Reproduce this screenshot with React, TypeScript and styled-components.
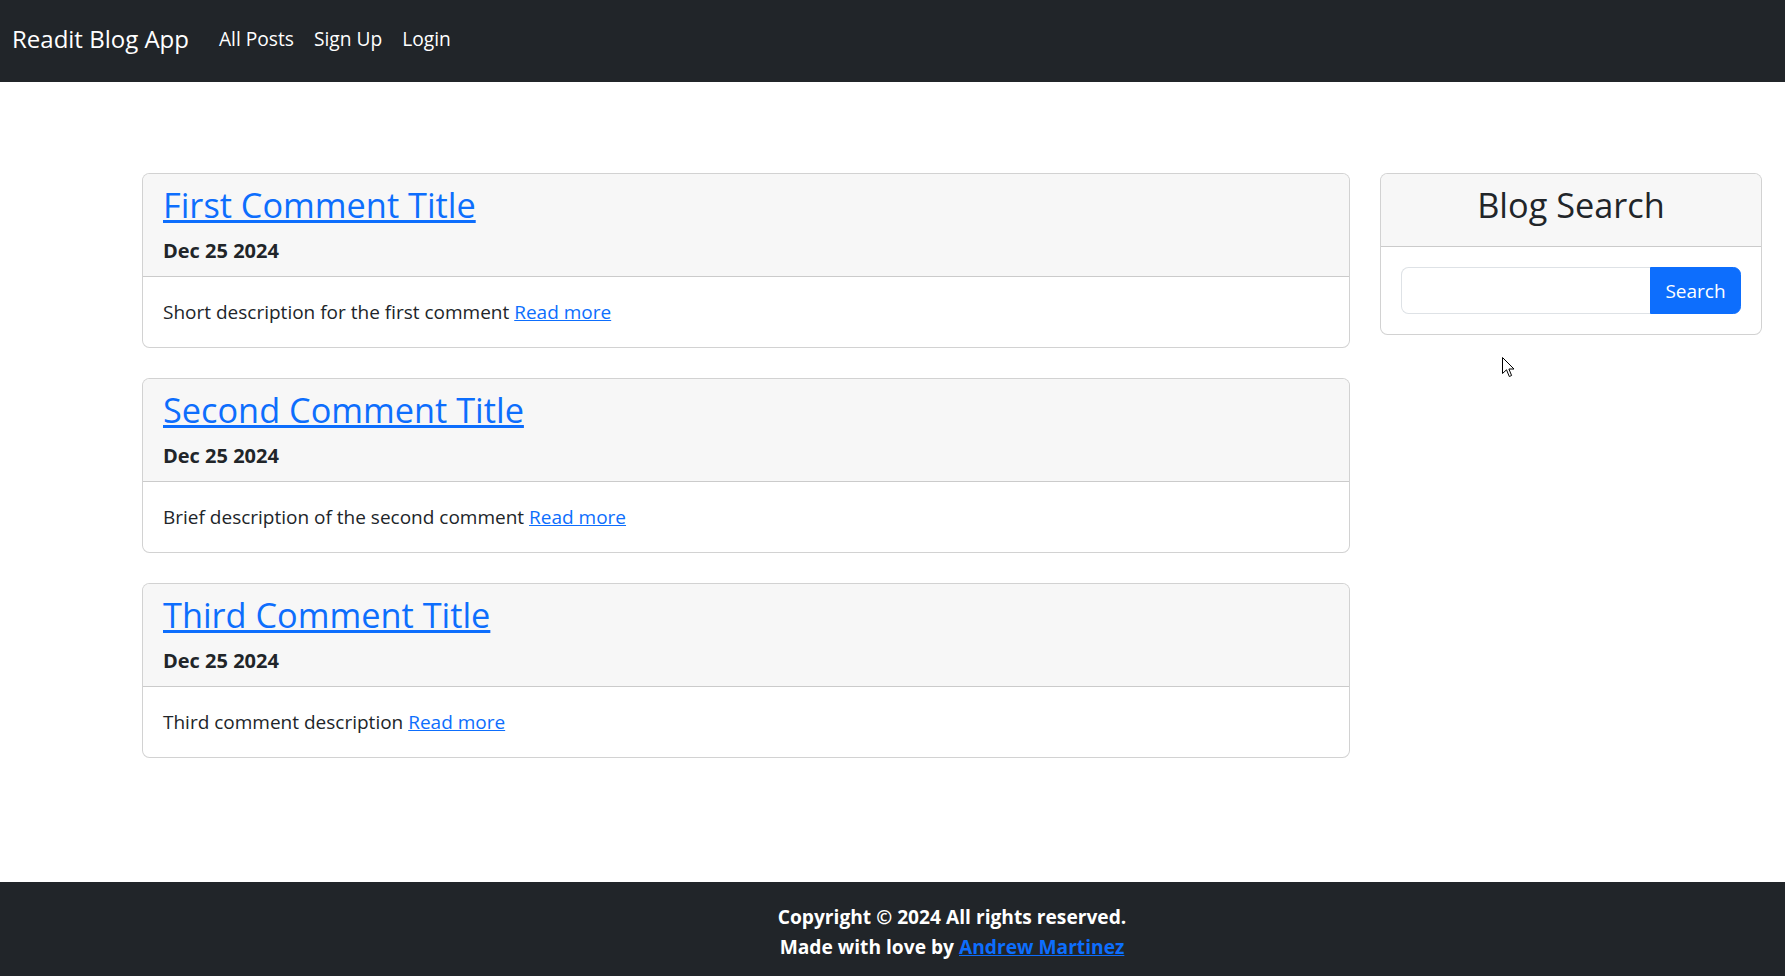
import React from "react";
import styled, { createGlobalStyle } from "styled-components";

const Global = createGlobalStyle`
  html, body { margin: 0; padding: 0; }
  body {
    font-family: "Open Sans", "Noto Sans", sans-serif;
    font-size: 19px;
    line-height: 30px;
    color: #212529;
    background: #fff;
  }
  * { box-sizing: border-box; }
`;

const Page = styled.div`
  position: relative;
`;

const Nav = styled.nav`
  height: 82px;
  background: #212529;
  display: flex;
  align-items: center;
  padding: 0 12px 4px;
`;

const Brand = styled.a`
  font-size: 24px;
  line-height: 37.5px;
  color: #fff;
  text-decoration: none;
  margin-right: 20px;
`;

const NavLinks = styled.div`
  display: flex;
`;

const NavLink = styled.a`
  color: #fff;
  font-size: 19.2px;
  line-height: 30px;
  padding: 10px;
  text-decoration: none;
`;

const Main = styled.main`
  min-height: 800px;
  padding: 91px 23px 40px 142px;
  display: grid;
  grid-template-columns: 1208px 382px;
  column-gap: 30px;
  align-items: start;
`;

const Posts = styled.div`
  display: flex;
  flex-direction: column;
  gap: 30px;
`;

const Card = styled.div`
  border: 1px solid rgba(0, 0, 0, 0.175);
  border-radius: 7.5px;
  overflow: hidden;
  background: #fff;
`;

const CardHeader = styled.div<{ $center?: boolean }>`
  padding: 10px 20px;
  background: #f7f7f7;
  border-bottom: 1px solid rgba(0, 0, 0, 0.175);
  text-align: ${(p) => (p.$center ? "center" : "left")};
`;

const Title = styled.h3`
  margin: 0 0 10px;
  font-size: 34.3px;
  line-height: 42px;
  font-weight: 400;
  color: #212529;
`;

const TitleLink = styled.a`
  color: #0d6efd;
  text-decoration: underline;
`;

const DateLine = styled.div`
  font-size: 20px;
  font-weight: 700;
  line-height: 30px;
`;

const CardBody = styled.div`
  padding: 20px;
`;

const Link = styled.a`
  color: #0d6efd;
  text-decoration: underline;
`;

const InputGroup = styled.div`
  display: flex;
  height: 47px;
`;

const Input = styled.input`
  flex: 1;
  min-width: 0;
  border: 1px solid #dee2e6;
  border-right: none;
  border-radius: 7.5px 0 0 7.5px;
  font: inherit;
  padding: 7.5px 15px;
  outline: none;
`;

const Button = styled.button`
  background: #0d6efd;
  border: 1px solid #0d6efd;
  color: #fff;
  font: inherit;
  border-radius: 0 7.5px 7.5px 0;
  padding: 0 10px;
  width: 91px;
`;

const Footer = styled.footer`
  background: #212529;
  color: #fff;
  text-align: center;
  padding: 20px 0 20px 119px;
  font-size: 19.2px;
  font-weight: 700;
  line-height: 30px;
`;

const Cursor = styled.svg`
  position: absolute;
  left: 1502px;
  top: 357px;
`;

const posts = [
  { title: "First Comment Title", desc: "Short description for the first comment" },
  { title: "Second Comment Title", desc: "Brief description of the second comment" },
  { title: "Third Comment Title", desc: "Third comment description" },
];

export default function App() {
  return (
    <Page>
      <Global />
      <Nav>
        <Brand href="#">Readit Blog App</Brand>
        <NavLinks>
          <NavLink href="#">All Posts</NavLink>
          <NavLink href="#">Sign Up</NavLink>
          <NavLink href="#">Login</NavLink>
        </NavLinks>
      </Nav>
      <Main>
        <Posts>
          {posts.map((p) => (
            <Card key={p.title}>
              <CardHeader>
                <Title>
                  <TitleLink href="#">{p.title}</TitleLink>
                </Title>
                <DateLine>Dec 25 2024</DateLine>
              </CardHeader>
              <CardBody>
                {p.desc} <Link href="#">Read more</Link>
              </CardBody>
            </Card>
          ))}
        </Posts>
        <Card>
          <CardHeader $center>
            <Title>Blog Search</Title>
          </CardHeader>
          <CardBody>
            <InputGroup>
              <Input type="text" />
              <Button>Search</Button>
            </InputGroup>
          </CardBody>
        </Card>
      </Main>
      <Footer>
        <div>Copyright © 2024 All rights reserved.</div>
        <div>
          Made with love by <Link href="#">Andrew Martinez</Link>
        </div>
      </Footer>
      <Cursor width="13" height="21" viewBox="0 0 13 21">
        <path d="M0.5 0.5 L0.5 16.5 L4.5 12.8 L7.3 19.5 L9.6 18.5 L6.9 12 L12 12 Z" fill="#fff" stroke="#000" strokeWidth="1" strokeLinejoin="miter" />
      </Cursor>
    </Page>
  );
}
